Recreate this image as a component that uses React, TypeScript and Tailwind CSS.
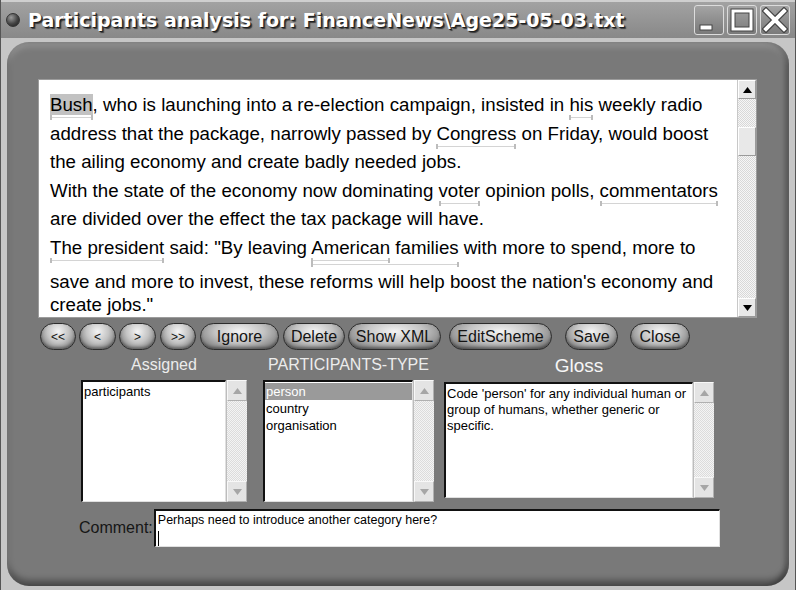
import React from "react";

const arial = "font-['Liberation_Sans',Arial,sans-serif]";

function Mark({ children, deep = false, hl = false }: { children: React.ReactNode; deep?: boolean; hl?: boolean }) {
  return (
    <span className={`relative ${hl ? "bg-[#c2c2c2]" : ""}`}>
      {children}
      <span
        className={`absolute left-0 right-0 h-[5px] border-x-2 border-[#bcbcbc] ${
          deep ? "top-[calc(100%+4px)]" : "top-[calc(100%)]"
        }`}
      >
        <span className="absolute left-0 right-0 top-[2px] h-px bg-[#d4d4d4]" />
      </span>
    </span>
  );
}

function Tri({ up, color }: { up?: boolean; color: string }) {
  return (
    <svg width="9" height="6" viewBox="0 0 9 6">
      <polygon points={up ? "0,6 9,6 4.5,0" : "0,0 9,0 4.5,6"} fill={color} />
    </svg>
  );
}

function MainScroll() {
  return (
    <div className="flex w-[19px] flex-col border-l border-[#c8c8c8]">
      <div className="flex h-[19px] items-center justify-center border border-t-white border-l-white border-b-[#9a9a9a] border-r-[#9a9a9a] bg-[#e8e8e8]">
        <Tri up color="#000" />
      </div>
      <div className="flex flex-1 flex-col bg-[repeating-conic-gradient(#d8d8d8_0_25%,#f6f6f6_0_50%)] bg-[length:2px_2px]">
        <div className="h-[28px]" />
        <div className="h-[29px] border border-t-white border-l-white border-b-[#9a9a9a] border-r-[#9a9a9a] bg-[#e8e8e8]" />
      </div>
      <div className="flex h-[19px] items-center justify-center border border-t-white border-l-white border-b-[#9a9a9a] border-r-[#9a9a9a] bg-[#e8e8e8]">
        <Tri color="#000" />
      </div>
    </div>
  );
}

function LightScroll() {
  return (
    <div className="flex w-[21px] flex-col border-l border-[#bdbdbd]">
      <div className="flex h-[21px] items-center justify-center border border-t-[#f8f8f8] border-l-[#f8f8f8] border-b-[#b0b0b0] border-r-[#b0b0b0] bg-[#e4e4e4]">
        <Tri up color="#a6a6a6" />
      </div>
      <div className="flex-1 bg-[repeating-conic-gradient(#dcdcdc_0_25%,#f4f4f4_0_50%)] bg-[length:2px_2px]" />
      <div className="flex h-[21px] items-center justify-center border border-t-[#f8f8f8] border-l-[#f8f8f8] border-b-[#b0b0b0] border-r-[#b0b0b0] bg-[#e4e4e4]">
        <Tri color="#a6a6a6" />
      </div>
    </div>
  );
}

function ListBox({ size, children }: { size: string; children?: React.ReactNode }) {
  return (
    <div className={`flex ${size}`}>
      <div className="flex-1 overflow-hidden border-t-2 border-l-2 border-b border-r border-t-[#111] border-l-[#111] border-b-[#e0e0e0] border-r-[#e0e0e0] bg-white">
        {children}
      </div>
      <LightScroll />
    </div>
  );
}

function Pill({ label, size, small }: { label: string; size: string; small?: boolean }) {
  return (
    <button
      className={`${size} flex h-[27px] shrink-0 items-center justify-center rounded-full border border-[#2c2c2c] bg-[radial-gradient(ellipse_at_50%_30%,#f4f4f4_0%,#c4c4c4_45%,#7c7c7c_85%,#555_100%)] shadow-[inset_0_-2px_3px_rgba(0,0,0,0.35)] text-[#141414] ${
        small ? "text-[12px]" : "text-[16px]"
      } leading-none`}
    >
      {label}
    </button>
  );
}

function WinBtn({ kind }: { kind: "min" | "max" | "close" }) {
  return (
    <div className="flex h-[30px] w-[30px] items-center justify-center rounded-[3px] border border-[#dcdcdc] bg-gradient-to-b from-[#a4a4a4] to-[#7a7a7a]">
      <svg width="26" height="26" viewBox="0 0 26 26">
        {kind === "min" && (
          <rect x="4" y="18" width="12" height="5" fill="#fff" stroke="#444" strokeWidth="1" />
        )}
        {kind === "max" && (
          <>
            <rect x="4" y="4" width="18" height="18" fill="none" stroke="#444" strokeWidth="5" />
            <rect x="4" y="4" width="18" height="18" fill="none" stroke="#fff" strokeWidth="3" />
          </>
        )}
        {kind === "close" && (
          <>
            <path d="M4 4 L22 22 M22 4 L4 22" stroke="#444" strokeWidth="6.5" strokeLinecap="square" />
            <path d="M4 4 L22 22 M22 4 L4 22" stroke="#fff" strokeWidth="4" strokeLinecap="square" />
          </>
        )}
      </svg>
    </div>
  );
}

export default function App() {
  return (
    <div className={`flex h-[590px] w-[796px] flex-col overflow-hidden border-x border-[#555] bg-[#c6c6c6] ${arial}`}>
      {/* title bar */}
      <div className="flex h-[38px] shrink-0 items-center border-t-2 border-[#cfcfcf] bg-gradient-to-b from-[#a2a2a2] to-[#888] pl-[5px] pr-[5px]">
        <span className="h-[14px] w-[14px] rounded-full border border-[#333] bg-[radial-gradient(circle_at_35%_30%,#9a9a9a_0%,#444_55%,#1c1c1c_100%)]" />
        <span className="ml-[8px] font-['DejaVu_Sans',Verdana,sans-serif] text-[19px] font-bold text-white [text-shadow:1px_1px_0_#1e1e1e,2px_2px_1px_#3a3a3a]">
          Participants analysis for: FinanceNews\Age25-05-03.txt
        </span>
        <div className="ml-auto flex gap-[3px]">
          <WinBtn kind="min" />
          <WinBtn kind="max" />
          <WinBtn kind="close" />
        </div>
      </div>

      {/* body panel */}
      <div className="mx-[6px] mb-[4px] mt-[4px] flex flex-1 flex-col rounded-[22px] bg-[#797979] pl-[31px] pt-[37px] shadow-[inset_0_5px_6px_rgba(255,255,255,0.18),inset_0_-6px_6px_rgba(0,0,0,0.35),inset_-4px_0_4px_rgba(0,0,0,0.25)]">
        {/* text area */}
        <div className="flex h-[239px] w-[719px] border border-[#9c9c9c] bg-white">
          <div className="flex-1 overflow-hidden pl-[11px] pt-[11px] text-[18.7px] text-black">
            <div className="h-[28.5px] leading-[28.5px] whitespace-nowrap">
              <Mark hl>Bush</Mark>, who is launching into a re-election campaign, insisted in <Mark>his</Mark> weekly radio
            </div>
            <div className="h-[28.5px] leading-[28.5px] whitespace-nowrap">
              address that the package, narrowly passed by <Mark>Congress</Mark> on Friday, would boost
            </div>
            <div className="h-[28.5px] leading-[28.5px] whitespace-nowrap">
              the ailing economy and create badly needed jobs.
            </div>
            <div className="h-[28.5px] leading-[28.5px] whitespace-nowrap">
              With the state of the economy now dominating <Mark>voter</Mark> opinion polls, <Mark>commentators</Mark>
            </div>
            <div className="h-[28.5px] leading-[28.5px] whitespace-nowrap">
              are divided over the effect the tax package will have.
            </div>
            <div className="h-[34.5px] leading-[28.5px] whitespace-nowrap">
              <Mark>The president</Mark> said: "By leaving{" "}
              <Mark deep>
                <Mark>American</Mark> families
              </Mark>{" "}
              with more to spend, more to
            </div>
            <div className="h-[23px] leading-[28.5px] whitespace-nowrap">
              save and more to invest, these reforms will help boost the nation's economy and
            </div>
            <div className="h-[28.5px] leading-[28.5px] whitespace-nowrap">create jobs."</div>
          </div>
          <MainScroll />
        </div>

        {/* buttons */}
        <div className="mt-[5px] flex pl-[2px]">
          <Pill label="<<" size="w-[36px]" small />
          <div className="ml-[3px]"><Pill label="<" size="w-[37px]" small /></div>
          <div className="ml-[3px]"><Pill label=">" size="w-[37px]" small /></div>
          <div className="ml-[4px]"><Pill label=">>" size="w-[36px]" small /></div>
          <div className="ml-[4px]"><Pill label="Ignore" size="w-[79px]" /></div>
          <div className="ml-[4px]"><Pill label="Delete" size="w-[62px]" /></div>
          <div className="ml-[3px]"><Pill label="Show XML" size="w-[93px]" /></div>
          <div className="ml-[8px]"><Pill label="EditScheme" size="w-[103px]" /></div>
          <div className="ml-[13px]"><Pill label="Save" size="w-[53px]" /></div>
          <div className="ml-[12px]"><Pill label="Close" size="w-[60px]" /></div>
        </div>

        {/* lists */}
        <div className="mt-[5px] flex pl-[43px]">
          <div className="flex w-[166px] flex-col">
            <div className="h-[25px] text-center text-[16px] leading-[20px] text-[#ececec]">Assigned</div>
            <ListBox size="h-[122px] w-[166px]">
              <div className="pl-[1px] pt-[1px] text-[13px] leading-[17px] text-black">participants</div>
            </ListBox>
          </div>
          <div className="ml-[16px] flex w-[171px] flex-col">
            <div className="h-[25px] text-center text-[16px] leading-[20px] text-[#ececec]">PARTICIPANTS-TYPE</div>
            <ListBox size="h-[122px] w-[171px]">
              <div className="pt-[1px] text-[13px] leading-[17px] text-black">
                <div className="bg-[#9a9a9a] pl-[1px] text-white">person</div>
                <div className="pl-[1px]">country</div>
                <div className="pl-[1px]">organisation</div>
              </div>
            </ListBox>
          </div>
          <div className="ml-[10px] flex w-[270px] flex-col">
            <div className="h-[27px] text-center text-[19px] leading-[22px] text-[#f6f6f6]">Gloss</div>
            <ListBox size="h-[116px] w-[270px]">
              <div className="pl-[1px] pt-[2px] text-[13px] leading-[16px] text-black">
                Code 'person' for any individual human or group of humans, whether generic or specific.
              </div>
            </ListBox>
          </div>
        </div>

        {/* comment */}
        <div className="mt-[7px] flex items-center pl-[41px]">
          <span className="text-[16px] text-[#161616]">Comment:</span>
          <div className="ml-[1px] h-[38px] w-[566px] border-t-2 border-l-2 border-b border-r border-t-[#111] border-l-[#111] border-b-[#e0e0e0] border-r-[#e0e0e0] bg-white pl-[2px] pt-[1px] text-[12.5px] leading-[16px] text-black">
            <div>Perhaps need to introduce another category here?</div>
            <div className="mt-[3px] h-[15px] w-px bg-black" />
          </div>
        </div>
      </div>
    </div>
  );
}
